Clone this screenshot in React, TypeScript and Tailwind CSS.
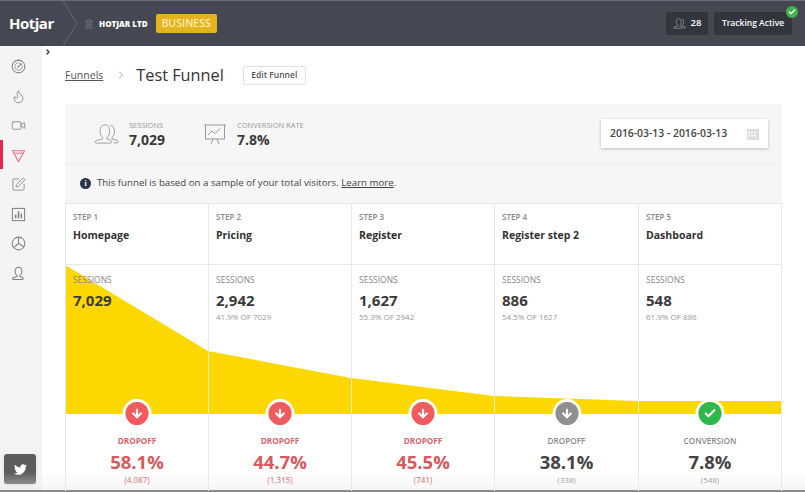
import { ArrowDown, Check, ChevronRight, Flame, Landmark, SquarePen, Video } from "lucide-react"
import { FaTwitter } from "react-icons/fa"

const steps = [
  { step: "STEP 1", name: "Homepage", sessions: "7,029", share: "", label: "DROPOFF", pct: "58.1%", count: "(4,087)", tone: "red" },
  { step: "STEP 2", name: "Pricing", sessions: "2,942", share: "41.9% OF 7029", label: "DROPOFF", pct: "44.7%", count: "(1,315)", tone: "red" },
  { step: "STEP 3", name: "Register", sessions: "1,627", share: "55.3% OF 2942", label: "DROPOFF", pct: "45.5%", count: "(741)", tone: "red" },
  { step: "STEP 4", name: "Register step 2", sessions: "886", share: "54.5% OF 1627", label: "DROPOFF", pct: "38.1%", count: "(338)", tone: "gray" },
  { step: "STEP 5", name: "Dashboard", sessions: "548", share: "61.9% OF 886", label: "CONVERSION", pct: "7.8%", count: "(548)", tone: "green" },
]

function Bust({ className }: { className: string }) {
  return (
    <svg viewBox="0 0 16 16" className={className} fill="none" stroke="currentColor" strokeWidth="1.1">
      <path d="M6.500 10.200C5.200 9.300 4.400 7.700 4.400 5.800 4.400 3 5.900 1.300 8 1.300s3.600 1.700 3.600 4.500c0 1.900-.8 3.500-2.100 4.400v1.100c1.600.4 3.600.9 3.600 2 0 .8-.8 1.200-1.800 1.200H3.200c-.9 0-1.600-.4-1.600-1.100 0-1.100 3.300-1.700 4.900-2.100z" />
    </svg>
  )
}

function BustPair({ className }: { className: string }) {
  return (
    <svg viewBox="0 0 26 24" className={className} fill="none" stroke="currentColor" strokeWidth="1">
      <path d="M9 15.500C7.200 14.200 6.300 11.800 6.300 9c0-4 2-6.500 5-6.500s5 2.500 5 6.500c0 2.800-.9 5.200-2.700 6.500v1.800c2.200.5 4.900 1.200 4.900 2.700 0 1-1 1.500-2.400 1.500H3.500C2.100 21.500 1 21 1 20c0-1.500 5.800-2.200 8-2.700z" />
      <path d="M17 3c2.600.3 4.300 2.700 4.300 6 0 2.800-.9 5.200-2.500 6.500v1.800c2.200.5 6.200 1 6.200 2.700 0 .8-.7 1.300-2 1.300h-2.500" />
    </svg>
  )
}

function Badge({ tone }: { tone: string }) {
  const bg = tone === "red" ? "bg-[#f15b5f]" : tone === "gray" ? "bg-[#8f8f8f]" : "bg-[#2fb84a]"
  return (
    <div className="absolute left-1/2 top-[-14px] -translate-x-1/2 w-[23px] h-[23px] box-content border-[3px] border-white rounded-full">
      <div className={`w-full h-full rounded-full flex items-center justify-center ${bg}`}>
        {tone === "green" ? (
          <Check className="w-[13px] h-[13px] text-white" strokeWidth={4} />
        ) : (
          <ArrowDown className="w-[13px] h-[13px] text-white" strokeWidth={4} />
        )}
      </div>
    </div>
  )
}

function Sidebar() {
  const cls = "w-[15px] h-[15px]"
  return (
    <aside className="relative w-[42px] shrink-0 bg-[#f4f4f4] text-[#808080] flex flex-col items-center pt-[13px] pr-[5px] gap-[14.5px]">
      <svg viewBox="0 0 16 16" className={cls} fill="none" stroke="currentColor" strokeWidth="1.1">
        <circle cx="8" cy="8" r="6.800" />
        <circle cx="8" cy="8" r="4" strokeWidth="0.7" />
        <path d="M6.800 9.200L11 5" />
      </svg>
      <Flame className={cls} strokeWidth={1.3} />
      <Video className={cls} strokeWidth={1.3} />
      <div className="absolute left-0 top-[94px] w-[3px] h-[29px] bg-[#e8274f]" />
      <svg viewBox="0 0 16 16" className={`${cls} text-[#ec6a85]`} fill="none" stroke="currentColor" strokeWidth="1.1">
        <path d="M1.500 3h13L8 14.500z" />
        <path d="M3.500 5.500h9" />
      </svg>
      <SquarePen className={cls} strokeWidth={1.3} />
      <svg viewBox="0 0 16 16" className={cls} fill="none" stroke="currentColor" strokeWidth="1.100">
        <rect x="1.500" y="1.500" width="13" height="13" />
        <path d="M5 12V8M8 12V4.500M11 12V7" strokeWidth="1.600" />
      </svg>
      <svg viewBox="0 0 16 16" className={cls} fill="none" stroke="currentColor" strokeWidth="1.100">
        <circle cx="8" cy="8" r="6.800" />
        <path d="M8 1.200V8l5.800 3.500M8 8L2.800 12.300" />
      </svg>
      <Bust className={cls} />
      <div className="absolute left-[4px] top-[408px] w-[32px] h-[30px] rounded-[3px] bg-[#5c5c5c] shadow flex items-center justify-center text-white">
        <FaTwitter className="w-[13px] h-[13px]" />
      </div>
    </aside>
  )
}

export default function App() {
  return (
    <div className="relative w-[805px] h-[492px] overflow-hidden flex flex-col bg-white font-['Open_Sans',sans-serif] text-[#3d3d3d]">
      <header className="h-[46px] shrink-0 bg-[#454852] border-t border-[#6b6d74] flex items-center text-white">
        <div className="relative w-[78px] h-full pl-[9px] flex items-center text-[15px] font-bold tracking-[-0.5px]">
          Hotjar
          <svg viewBox="0 0 16 46" className="absolute left-[62px] top-0 w-[16px] h-[45px] text-[#666973]" fill="none" stroke="currentColor">
            <path d="M1 0l14 23L1 46" />
          </svg>
        </div>
        <Landmark className="w-[10px] h-[10px] ml-[6px] text-[#777a82]" />
        <span className="ml-[5px] text-[8px] font-extrabold">HOTJAR LTD</span>
        <span className="ml-[8px] w-[61px] h-[19px] rounded-[2px] bg-[#e5b31d] flex items-center justify-center text-[10.5px] font-semibold text-[#fbeeb6]">BUSINESS</span>
        <div className="ml-auto flex items-center gap-[6px] pr-[13px]">
          <div className="w-[42px] h-[23px] rounded-[2px] bg-[#33353d] flex items-center justify-center gap-[5px] text-[9.5px] font-semibold">
            <BustPair className="w-[13px] h-[13px] text-[#c8c8c8]" />
            28
          </div>
          <div className="relative w-[78px] h-[23px] rounded-[2px] bg-[#33353d] flex items-center justify-center text-[8.5px] font-semibold">
            Tracking Active
            <span className="absolute right-[-6px] top-[-6px] w-[12px] h-[12px] rounded-full bg-[#3fb54c] flex items-center justify-center">
              <Check className="w-[8px] h-[8px] text-white" strokeWidth={4} />
            </span>
          </div>
        </div>
      </header>

      <div className="flex flex-1 min-h-0">
        <Sidebar />
        <main className="relative flex-1 px-[23px]">
          <ChevronRight className="absolute left-[2px] top-[2px] w-[8px] h-[8px] text-[#333]" strokeWidth={4} />
          <div className="h-[58px] flex items-center">
            <span className="text-[10.5px] underline text-[#555] mt-[2px]">Funnels</span>
            <ChevronRight className="ml-[12px] w-[12px] h-[12px] text-[#888]" strokeWidth={1.5} />
            <span className="ml-[9px] text-[16.3px] text-[#333]">Test Funnel</span>
            <span className="ml-[19px] w-[63px] h-[19px] border border-[#e2e2e2] rounded-[2px] flex items-center justify-center text-[8.5px] font-semibold text-[#555]">Edit Funnel</span>
          </div>

          <section className="bg-[#f6f6f6] h-[99px]">
            <div className="h-[60px] border-b border-[#eeeeee] flex items-center pl-[29px] pr-[14px]">
              <BustPair className="w-[25px] h-[24px] text-[#999]" />
              <div className="ml-[10px] w-[74px]">
                <div className="text-[7.5px] leading-[10px] text-[#999]">SESSIONS</div>
                <div className="mt-[1px] text-[14px] leading-[17px] font-bold text-[#3a3a3a]">7,029</div>
              </div>
              <svg viewBox="0 0 24 24" className="w-[24px] h-[24px] text-[#999]" fill="none" stroke="currentColor" strokeWidth="1">
                <path d="M1 3h22M2.500 3v14h19V3M8 22l2-5M16 22l-2-5" />
                <path d="M5 13l4-4 3 2.500 5-5" />
              </svg>
              <div className="ml-[10px]">
                <div className="text-[7.5px] leading-[10px] text-[#999]">CONVERSION RATE</div>
                <div className="mt-[1px] text-[14px] leading-[17px] font-bold text-[#3a3a3a]">7.8%</div>
              </div>
              <div className="ml-auto w-[167px] h-[29px] bg-white shadow-[0_1px_3px_rgba(0,0,0,0.25)] flex items-center justify-between pl-[9px] pr-[9px] text-[10.4px] font-semibold text-[#444]">
                2016-03-13 - 2016-03-13
                <svg viewBox="0 0 12 12" className="w-[12px] h-[12px] text-[#dddddd]" fill="currentColor">
                  <path d="M0 1h12v11H0zM1 4v1.500h2V4zM4 4v1.500h2V4zM7 4v1.500h2V4zM1 7v1.500h2V7zM4 7v1.500h2V7zM7 7v1.500h2V7z" fillRule="evenodd" />
                </svg>
              </div>
            </div>
            <div className="h-[39px] flex items-center pl-[15px] text-[9.7px] text-[#444]">
              <span className="w-[11px] h-[11px] rounded-full bg-[#2a3444] text-white text-[8px] font-bold font-['Liberation_Serif',serif] flex items-center justify-center">i</span>
              <span className="ml-[6px]">This funnel is based on a sample of your total visitors. <span className="underline">Learn more</span>.</span>
            </div>
          </section>

          <section className="relative grid grid-cols-[143px_143px_143px_144px_144px] h-[288px] border-t border-[#e8e8e8]">
            <svg viewBox="0 0 717 149" preserveAspectRatio="none" className="absolute left-0 top-[61px] w-[717px] h-[149px]">
              <path d="M0 0L143 86L286 113L429 131L573 136L717 136V149H0Z" fill="#fdd800" />
            </svg>
            {steps.map((s, i) => (
              <div key={s.step} className={`relative flex flex-col border-l border-[#e8e8e8] ${i === 4 ? "border-r" : ""}`}>
                <div className="h-[61px] shrink-0 border-b border-[#e8e8e8] pl-[7px] pt-[7px]">
                  <div className="text-[8px] leading-[11px] font-semibold text-[#888]">{s.step}</div>
                  <div className="mt-[6px] text-[10.5px] leading-[14px] font-bold text-[#333]">{s.name}</div>
                </div>
                <div className="relative h-[148px] shrink-0 pl-[7px] pt-[9px]">
                  <div className="text-[8.5px] leading-[11px] text-[#888]">SESSIONS</div>
                  <div className="mt-[6px] text-[15px] leading-[18px] font-bold text-[#3a3a3a]">{s.sessions}</div>
                  <div className="mt-[2px] text-[8px] leading-[11px] text-[#999]">{s.share}</div>
                </div>
                <div className="relative flex-1 flex flex-col items-center pt-[22px]">
                  <Badge tone={s.tone} />
                  <div className={`text-[8.2px] leading-[11px] ${s.tone === "red" ? "font-bold text-[#d9666a]" : "font-semibold text-[#8a8a8a]"}`}>{s.label}</div>
                  <div className={`mt-[5px] text-[18.5px] leading-[22px] font-bold ${s.tone === "red" ? "text-[#d9595d]" : "text-[#444]"}`}>{s.pct}</div>
                  <div className={`mt-[1px] text-[8px] leading-[11px] ${s.tone === "red" ? "font-semibold text-[#d9777a]" : "text-[#888]"}`}>{s.count}</div>
                </div>
              </div>
            ))}
          </section>
        </main>
      </div>
      <div className="h-[2px] shrink-0 bg-[#8a8a8a]" />
      {/* fade along the bottom edge */}
      <div className="absolute left-0 right-0 bottom-[2px] h-[18px] bg-gradient-to-b from-transparent to-[#ececec]/50 pointer-events-none" />
    </div>
  )
}
